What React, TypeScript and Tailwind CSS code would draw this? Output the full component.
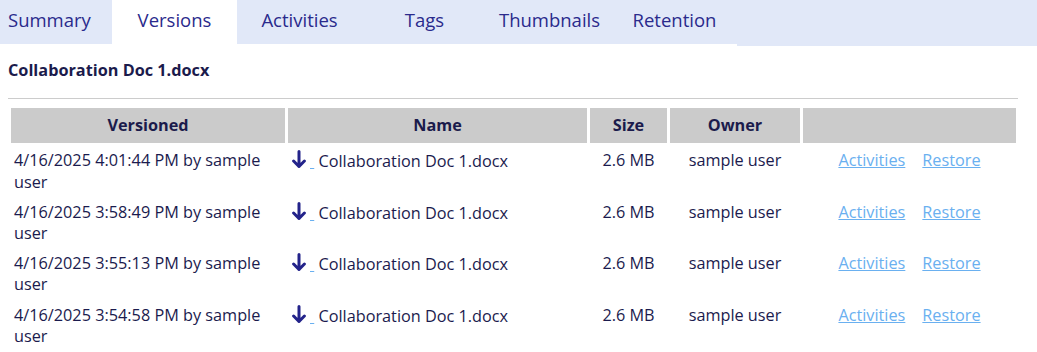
import React from "react";

const tabs = [
  { id: "summary", label: "Summary", width: "w-[112px] justify-start pl-2" },
  { id: "versions", label: "Versions", width: "w-[125px] justify-center" },
  { id: "activities", label: "Activities", width: "w-[125px] justify-center" },
  { id: "tags", label: "Tags", width: "w-[125px] justify-center" },
  { id: "thumbnails", label: "Thumbnails", width: "w-[125px] justify-center" },
  { id: "retention", label: "Retention", width: "w-[125px] justify-center" },
];

const versions = [
  { when: "4/16/2025 4:01:44 PM", by: "sample user" },
  { when: "4/16/2025 3:58:49 PM", by: "sample user" },
  { when: "4/16/2025 3:55:13 PM", by: "sample user" },
  { when: "4/16/2025 3:54:58 PM", by: "sample user" },
];

const DownloadArrow = () => (
  <svg width="18" height="19" viewBox="0 0 18 19" className="inline-block align-[-2px]">
    <path
      d="M7 1.5V16.5M1.6 11L7 16.5L12.4 11"
      fill="none"
      stroke="#23238a"
      strokeWidth="3"
      strokeLinecap="round"
      strokeLinejoin="round"
    />
  </svg>
);

export default function App() {
  const activeTab = "versions";

  return (
    <div className="min-h-screen bg-white text-[16.25px] leading-[21.2px] text-[#1b1b4e] font-['Open_Sans',sans-serif]">
      <div className="flex items-start">
        <div className="flex">
          {tabs.map((tab) => (
            <div
              key={tab.id}
              className={`flex h-[44px] items-center pb-[4px] text-[18.5px] text-[#2a2a8c] ${tab.width} ${
                activeTab === tab.id ? "bg-white" : "bg-[#e1e8f8]"
              }`}
            >
              {tab.label}
            </div>
          ))}
        </div>
        <div className="h-[46px] flex-1 bg-[#e1e8f8]" />
      </div>

      <div className="px-2">
        <h2 className="pt-[14px] font-bold text-[#1b1b4c]">Collaboration Doc 1.docx</h2>
        <hr className="mt-[17px] w-[1010px] border-t border-[#cccccc]" />

        <table className="mt-[6px] w-[1011px] table-fixed border-separate border-spacing-[3px]">
          <colgroup>
            <col className="w-[274px]" />
            <col className="w-[299px]" />
            <col className="w-[77px]" />
            <col className="w-[130px]" />
            <col className="w-[213px]" />
          </colgroup>
          <thead>
            <tr className="bg-[#cbcbcb] font-bold text-[#1b1b4c]">
              <th className="py-[7px]">Versioned</th>
              <th className="py-[7px]">Name</th>
              <th className="py-[7px]">Size</th>
              <th className="py-[7px]">Owner</th>
              <th className="py-[7px]"></th>
            </tr>
          </thead>
          <tbody>
            {versions.map((v) => (
              <tr key={v.when} className="align-top">
                <td className="px-[3px] pt-[4px] pb-[2px]">
                  {v.when} by {v.by}
                </td>
                <td className="px-[4px] pt-[4px] pb-[2px]">
                  <a href="#" className="text-[#6ab0f0] underline">
                    <DownloadArrow />
                    &nbsp;
                  </a>{" "}
                  Collaboration Doc 1.docx
                </td>
                <td className="pt-[4px] pb-[2px] text-center">2.6 MB</td>
                <td className="pt-[4px] pb-[2px] text-center">{v.by}</td>
                <td className="pt-[4px] pb-[2px] text-center">
                  <a href="#" className="text-[#6ab0f0] underline">
                    Activities
                  </a>
                  <a href="#" className="ml-[17px] text-[#6ab0f0] underline">
                    Restore
                  </a>
                </td>
              </tr>
            ))}
          </tbody>
        </table>
      </div>
    </div>
  );
}
